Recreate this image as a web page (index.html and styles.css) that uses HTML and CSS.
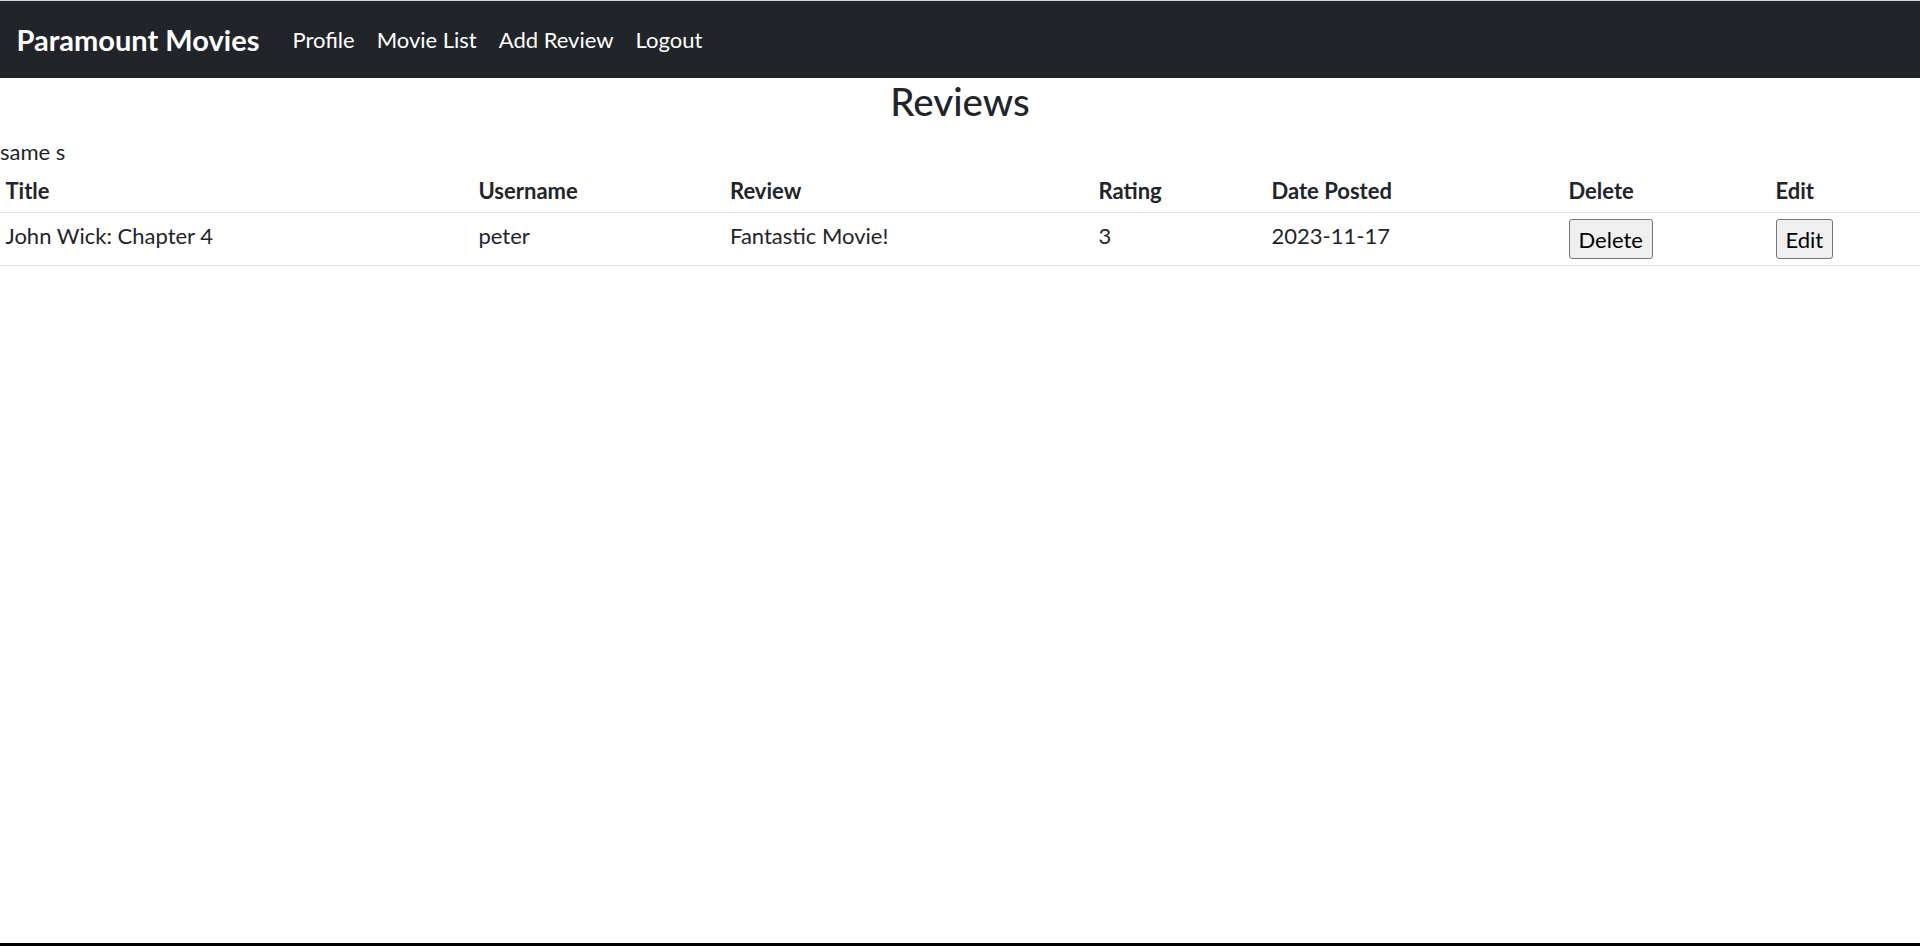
FILE: index.html
```html
<!DOCTYPE html>
<html lang="en">
<head>
<meta charset="utf-8">
<title>Reviews - Paramount Movies</title>
<link rel="stylesheet" href="styles.css">
</head>
<body>
  <div class="topline"></div>
  <nav class="navbar">
    <a class="brand" href="#">Paramount Movies</a>
    <ul class="nav">
      <li><a class="nav-link" href="#">Profile</a></li>
      <li><a class="nav-link" href="#">Movie List</a></li>
      <li><a class="nav-link" href="#">Add Review</a></li>
      <li><a class="nav-link" href="#">Logout</a></li>
    </ul>
  </nav>
  <main class="page">
    <h3 class="page-title">Reviews</h3>
    <div class="note">same s</div>
    <table class="reviews">
      <colgroup>
        <col class="c-title">
        <col class="c-user">
        <col class="c-review">
        <col class="c-rating">
        <col class="c-date">
        <col class="c-delete">
        <col class="c-edit">
      </colgroup>
      <thead>
        <tr>
          <th>Title</th>
          <th>Username</th>
          <th>Review</th>
          <th>Rating</th>
          <th>Date Posted</th>
          <th>Delete</th>
          <th>Edit</th>
        </tr>
      </thead>
      <tbody>
        <tr>
          <td>John Wick: Chapter 4</td>
          <td>peter</td>
          <td>Fantastic Movie!</td>
          <td>3</td>
          <td>2023-11-17</td>
          <td><button class="btn" type="button">Delete</button></td>
          <td><button class="btn" type="button">Edit</button></td>
        </tr>
      </tbody>
    </table>
  </main>
  <div class="bottom-bar"></div>
</body>
</html>
```

FILE: styles.css
```css
* {
  box-sizing: border-box;
}

html, body {
  margin: 0;
  padding: 0;
}

body {
  min-height: 100vh;
  display: flex;
  flex-direction: column;
  font-family: Lato, "Open Sans", "Liberation Sans", sans-serif;
  font-size: 22px;
  line-height: 1.5;
  color: #212529;
  background: #fff;
}

.topline {
  height: 1px;
  background: #d6d6d6;
}

.navbar {
  display: flex;
  align-items: center;
  background: #212529;
  padding: 11px 16.5px;
}

.brand {
  font-size: 29px;
  font-weight: 700;
  line-height: 41.25px;
  padding: 6.875px 0;
  margin-right: 22px;
  color: #fff;
  text-decoration: none;
  white-space: nowrap;
}

.nav {
  display: flex;
  list-style: none;
  margin: 0;
  padding: 0;
}

.nav-link {
  display: block;
  padding: 11px;
  font-size: 22px;
  line-height: 1.5;
  color: #fff;
  text-decoration: none;
}

.page {
  flex: 1;
}

.page-title {
  margin: 0 0 11px;
  font-size: 38.5px;
  font-weight: 500;
  line-height: 1.2;
  text-align: center;
  color: #212529;
}

.note {
  line-height: 33px;
}

.reviews {
  width: 100%;
  border-collapse: collapse;
  vertical-align: top;
}

.c-title { width: 473px; }
.c-user { width: 251.5px; }
.c-review { width: 368.5px; }
.c-rating { width: 173px; }
.c-date { width: 297px; }
.c-delete { width: 207px; }
.c-edit { width: 150px; }

.reviews th,
.reviews td {
  padding: 5.5px;
  text-align: left;
  border-bottom: 1px solid #dee2e6;
  line-height: 33px;
}

.reviews th {
  font-weight: 700;
  vertical-align: bottom;
}

.reviews td {
  vertical-align: top;
}

.btn {
  font-family: inherit;
  font-size: 22px;
  line-height: 33px;
  color: #000;
  background: #efefef;
  border: 1px solid #767676;
  border-radius: 3px;
  padding: 2.5px 9px;
  margin-top: 0.5px;
  cursor: pointer;
}

.bottom-bar {
  height: 3px;
  background: #000;
}
```
